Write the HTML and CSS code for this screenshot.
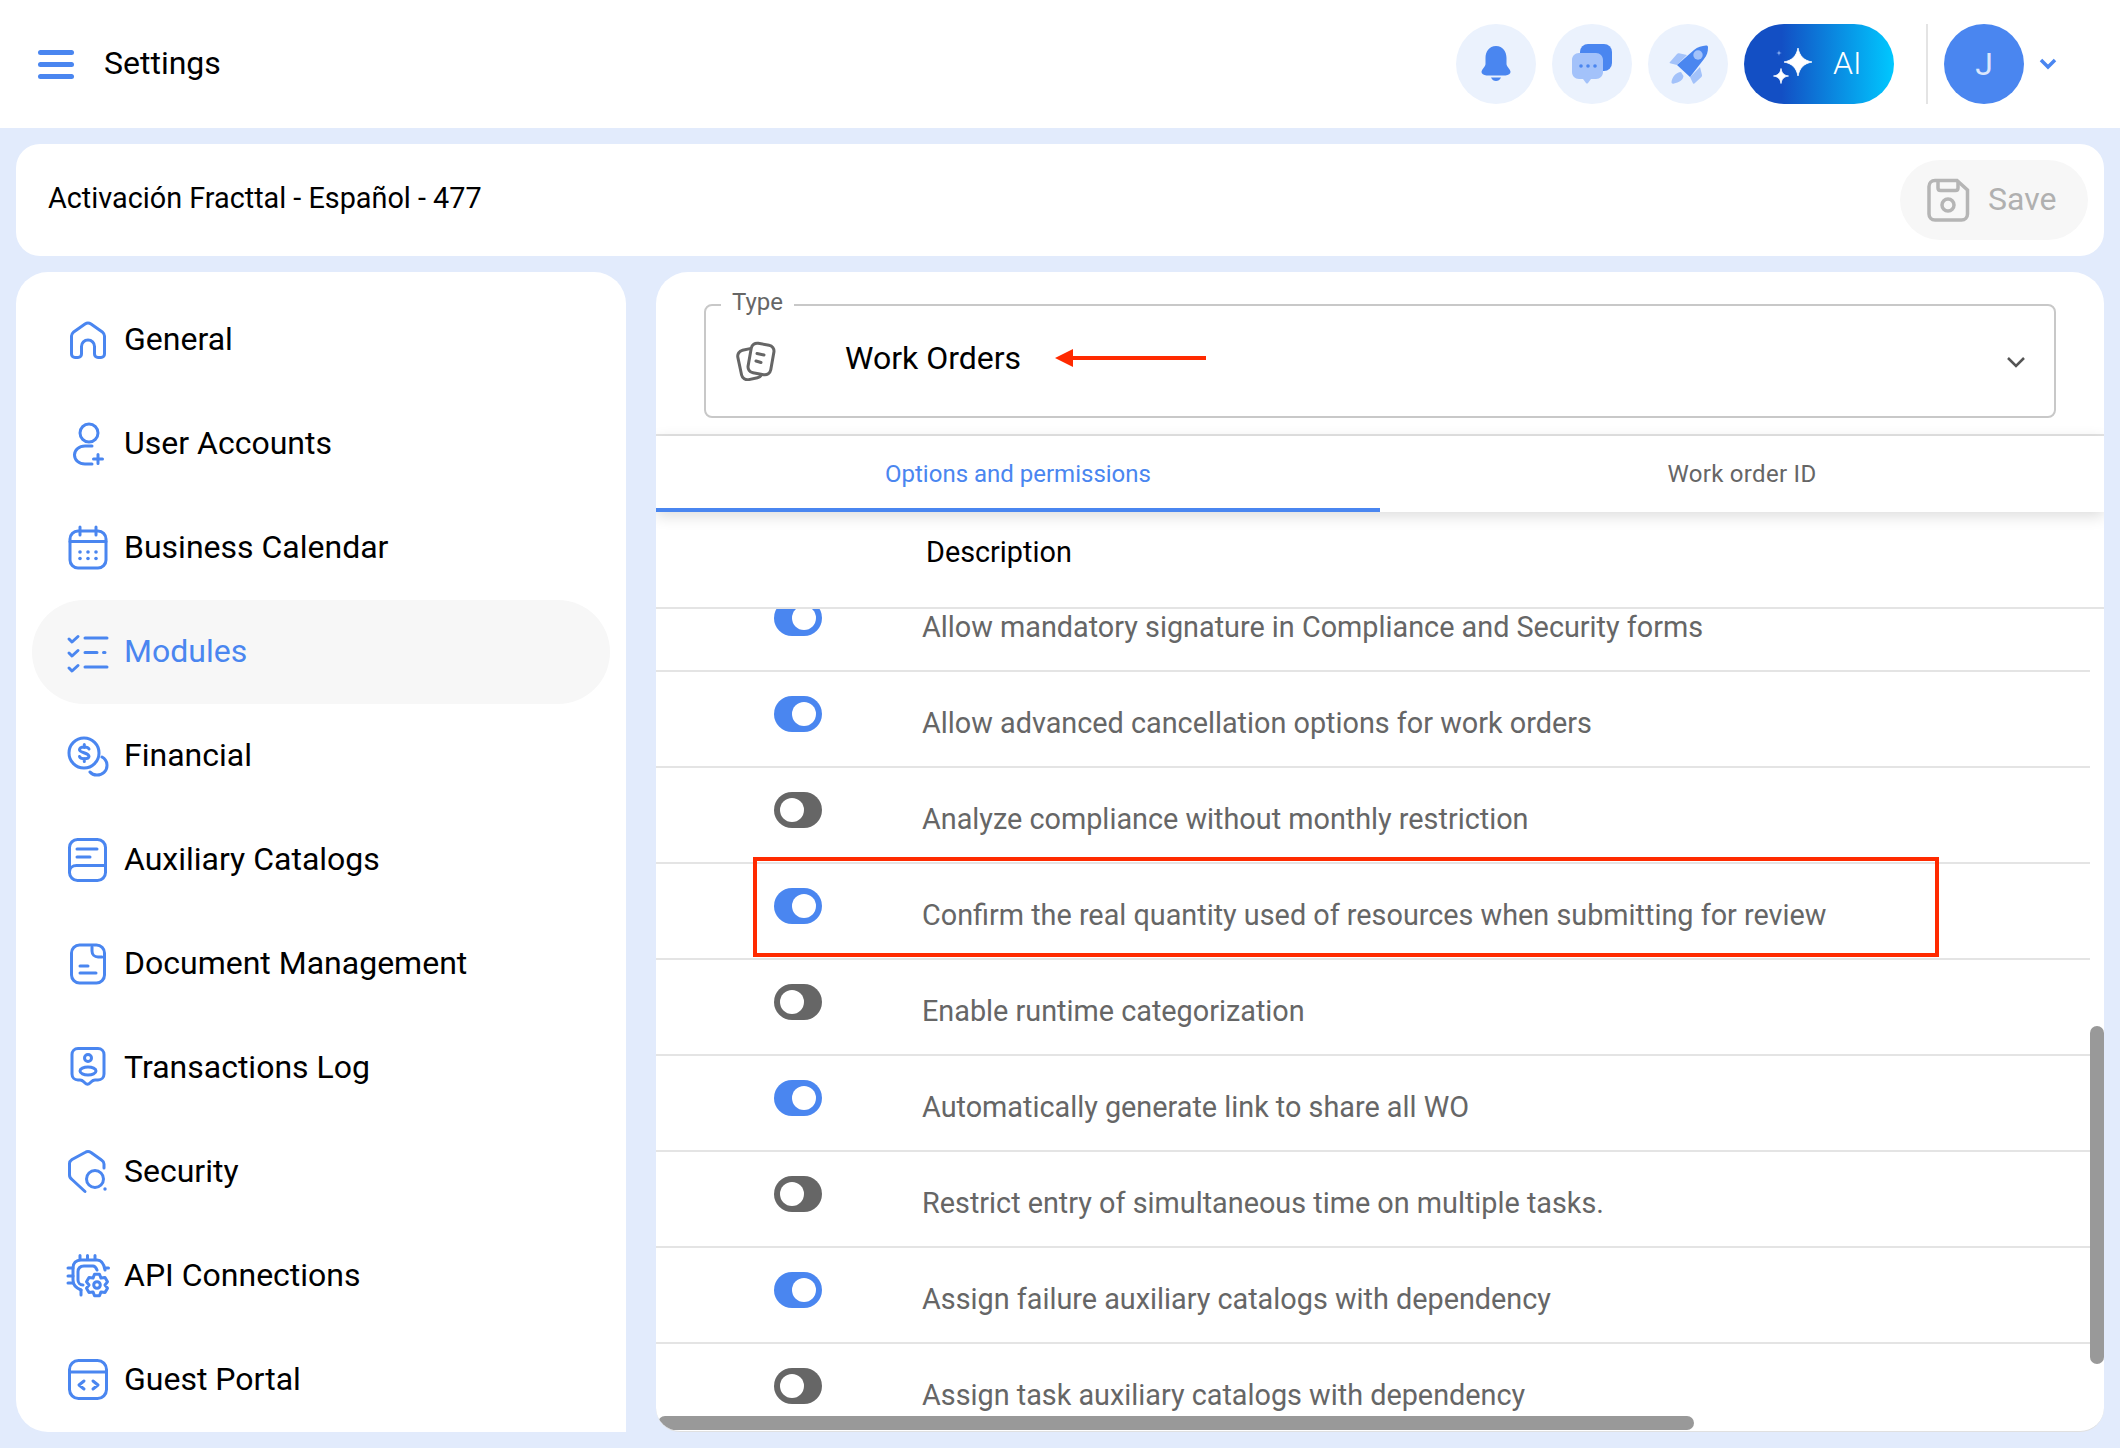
FILE: index.html
```html
<!DOCTYPE html>
<html lang="en">
<head>
    <meta charset="UTF-8">
    <meta name="viewport" content="width=device-width, initial-scale=1.0">
    <title>Settings</title>
    <link rel="stylesheet" href="styles.css">
</head>
<body>
    <header class="topbar">
        <div class="menu-icon"><span></span><span></span><span></span></div>
        <div class="topbar-title">Settings</div>
        <div class="topbar-actions">
            <div class="round-button">
                <svg width="80" height="80" viewBox="0 0 80 80">
                    <path class="fill-blue" d="M40 22c-7 0-10.500 6-10.500 12v6c0 3-4 5-4 8 0 2 2 3 5 3.500h19c3-.5 5-1.500 5-3.500 0-3-4-5-4-8v-6c0-6-3.500-12-10.500-12z"/>
                    <path class="fill-blue" d="M35 53.500h10c-1 2.500-3 3.500-5 3.500s-4-1-5-3.500z"/>
                </svg>
            </div>
            <div class="round-button">
                <svg width="80" height="80" viewBox="0 0 80 80">
                    <rect class="fill-blue" x="28" y="20" width="32" height="27" rx="8"/>
                    <path class="fill-light" d="M27 29h17c4 0 7 3 7 7v12c0 4-3 7-7 7h-5l-3 4c-.6.8-1.400.8-2 0l-3-4h-4c-4 0-7-3-7-7V36c0-4 3-7 7-7z"/>
                    <circle class="fill-blue" cx="29" cy="42" r="1.800"/>
                    <circle class="fill-blue" cx="36" cy="42" r="1.800"/>
                    <circle class="fill-blue" cx="43" cy="42" r="1.800"/>
                </svg>
            </div>
            <div class="round-button">
                <svg width="80" height="80" viewBox="0 0 80 80">
                    <path class="fill-light" d="M22 38l7-8c.6-.7 1.200-1 2-.8l8 1.800-10 10-6-1.500c-1.400-.4-1.800-.7-1-1.500z"/>
                    <path class="fill-light" d="M42 53l10-10 2 8c.2.800 0 1.400-.6 2l-7 6.500c-.8.700-1.400.3-1.800-1z"/>
                    <path class="fill-light" d="M33 48c-5 .5-9 5-9.500 10 0 1.500 1 2 2.500 1.500 5-1 9-3 9.500-7.500z"/>
                    <path class="fill-blue" d="M29 41l17-15c3.500-3 8-4 12-4.500 1.500 0 2 .5 2 2 0 4-1 8-4 11.500L42 53z"/>
                    <circle class="fill-light" cx="50" cy="31" r="4.700"/>
                </svg>
            </div>
            <div class="ai-button">
                <svg width="82" height="80" viewBox="0 0 82 80">
                    <path class="star" d="M54 24c1.500 8 6 12.500 14 14-8 1.500-12.500 6-14 14-1.500-8-6-12.500-14-14 8-1.500 12.500-6 14-14z"/>
                    <path class="star" d="M37 44.500c.7 4.500 3 6.800 7.500 7.500-4.500.7-6.800 3-7.500 7.500-.7-4.500-3-6.800-7.500-7.500 4.500-.7 6.800-3 7.500-7.500z"/>
                    <path class="fill-faint" d="M35 26c.2 2 1 2.800 3 3-2 .2-2.800 1-3 3-.2-2-1-2.800-3-3 2-.2 2.800-1 3-3z"/>
                </svg>
                <span>AI</span>
            </div>
            <div class="topbar-divider"></div>
            <div class="avatar">J</div>
            <svg class="avatar-chevron" width="18" height="12" viewBox="0 0 18 12">
                <path d="M2 2l7 7 7-7"/>
            </svg>
        </div>
    </header>

    <main class="page">
        <section class="title-card">
            <div class="title-text">Activación Fracttal - Español - 477</div>
            <div class="save-button">
                <svg width="44" height="44" viewBox="0 0 44 44">
                    <path d="M9 2.500h22l10.500 9.500v24c0 3.500-2.500 6-6 6H9c-3.500 0-6-2.500-6-6V8.500c0-3.500 2.500-6 6-6z"/>
                    <path d="M12 3v7c0 1.500 1 2.500 2.500 2.500h15c1.500 0 2.500-1 2.500-2.500V3"/>
                    <circle cx="22" cy="27" r="6"/>
                </svg>
                <span>Save</span>
            </div>
        </section>

        <div class="columns">
            <nav class="sidebar">
                <a class="side-item">
                    <svg class="side-icon" viewBox="0 0 48 48"><path d="M7.500 38V20c0-1.500.7-2.800 1.800-3.700L21 8c1.800-1.300 4.200-1.300 6 0l11.700 8.300c1.100.9 1.800 2.200 1.800 3.700v18c0 2-1.500 3.500-3.500 3.500h-3c-2 0-3.500-1.500-3.500-3.500v-7.500c0-3.600-2.900-6.500-6.500-6.500s-6.500 2.900-6.500 6.500V38c0 2-1.500 3.500-3.500 3.500h-3c-2 0-3.500-1.500-3.500-3.500z"/></svg>
                    <span>General</span>
                </a>
                <a class="side-item">
                    <svg class="side-icon" viewBox="0 0 48 48"><circle cx="25" cy="13" r="9"/><path d="M28 26h-7c-6 0-10.500 4-10.500 9s4.500 9 10.500 9h7"/><path d="M34 34.500v9M29.500 39h9"/></svg>
                    <span>User Accounts</span>
                </a>
                <a class="side-item">
                    <svg class="side-icon" viewBox="0 0 48 48"><rect x="6" y="7" width="36" height="37" rx="8"/><path d="M6 17.500h36M16 3v8M32 3v8"/><g class="icon-dots"><circle cx="16" cy="28" r="1.800"/><circle cx="24" cy="28" r="1.800"/><circle cx="32" cy="28" r="1.800"/><circle cx="16" cy="34.500" r="1.800"/><circle cx="24" cy="34.500" r="1.800"/><circle cx="32" cy="34.500" r="1.800"/></g></svg>
                    <span>Business Calendar</span>
                </a>
                <a class="side-item active">
                    <svg class="side-icon" viewBox="0 0 48 48"><path d="M5 11l3 3 6-5.500M5 25l3 3 6-5.500M5 40l3 3 6-5.500"/><path d="M21 10h22M21 24.500h12M39.500 24.500h1.500M21 39h22"/></svg>
                    <span>Modules</span>
                </a>
                <a class="side-item">
                    <svg class="side-icon" viewBox="0 0 48 48"><circle cx="20" cy="21" r="15"/><path d="M38 25c3.500 2 5 5 5 8.500 0 5.500-4.500 9.500-10 9.500-3 0-5.500-1-7-3"/><path d="M25 17c-1-2.500-9-3-9.500.5-.5 3.500 9.500 3 9.500 7-.5 3-8.500 3-9.500 0M20.300 12.500v3M20.300 26.500v3"/></svg>
                    <span>Financial</span>
                </a>
                <a class="side-item">
                    <svg class="side-icon" viewBox="0 0 48 48"><rect x="5.500" y="3.500" width="36" height="41" rx="8"/><path d="M5.500 36c0-4 3-6.500 7-6.500h29M13 13h20M13 21h13"/></svg>
                    <span>Auxiliary Catalogs</span>
                </a>
                <a class="side-item">
                    <svg class="side-icon" viewBox="0 0 48 48"><rect x="7.500" y="5" width="33" height="38" rx="8"/><path d="M28 7v4c0 3.500 2.500 6 6 6h4M16 26h8M16 33h16"/></svg>
                    <span>Document Management</span>
                </a>
                <a class="side-item">
                    <svg class="side-icon" viewBox="0 0 48 48"><path d="M14 4.500h20c3.500 0 6 2.500 6 6V30c0 3.500-2.500 6-6 6h-3c-2 0-3 1-4 2l-1 1c-1.500 1.500-3.500 1.500-5 0l-1-1c-1-1-2-2-4-2h-2c-3.500 0-6-2.500-6-6V10.500c0-3.500 2.500-6 6-6z"/><circle cx="24" cy="14" r="3.500"/><ellipse cx="24" cy="27" rx="8" ry="4"/></svg>
                    <span>Transactions Log</span>
                </a>
                <a class="side-item">
                    <svg class="side-icon" viewBox="0 0 48 48"><path d="M40 20v-4c0-2-1-3-2.500-4L27 4.500c-2-1.200-4-1.200-6 0L8 11.500c-1.500 1-2.500 2-2.500 4V27c0 2 1 3.500 2.500 4.500L21 43.500"/><circle cx="31" cy="31" r="8.500"/><circle class="icon-dot" cx="41" cy="41" r="1.700"/></svg>
                    <span>Security</span>
                </a>
                <a class="side-item">
                    <svg class="side-icon" viewBox="0 0 48 48"><path d="M41 18c-1-6-3-10-8-10H17c-5 0-8 3-8 8v12c0 4 3 8 8 10"/><path d="M33 18c-1-2.500-2-4-4-4H20c-3.500 0-6 2-6 6v8c0 2.500 2 5 5 5"/><path d="M16 3.500v4M23.500 3.500v4M31 3.500v4M4 16h5M4 24h5M4 31h5M41 16h3.500M17 38v5"/><path d="M30.500 22.300h5l1.500 3.800 4-.6 2.500 4.300-2.500 3.200 2.500 3.200-2.500 4.300-4-.6-1.500 3.800h-5l-1.500-3.800-4 .6-2.500-4.300 2.500-3.200-2.500-3.200 2.500-4.300 4 .6z"/><circle cx="33" cy="33" r="3.300"/></svg>
                    <span>API Connections</span>
                </a>
                <a class="side-item">
                    <svg class="side-icon" viewBox="0 0 48 48"><rect x="5.500" y="4.500" width="37" height="38" rx="9"/><path d="M5.500 16h37M20 25l-5 4 5 4M29 25l5 4-5 4"/></svg>
                    <span>Guest Portal</span>
                </a>
            </nav>

            <section class="panel">
                <div class="type-wrap">
                    <div class="type-select">
                        <span class="type-label">Type</span>
                        <svg class="type-icon" width="40" height="40" viewBox="0 0 40 40">
                            <rect x="3.500" y="8" width="21" height="30" rx="6" transform="rotate(-12 14 23)"/>
                            <rect class="type-card" x="13.500" y="3" width="23" height="30" rx="6" transform="rotate(10 25 18)"/>
                            <path d="M21 12.500l7 1.500M20 20l5 1.500"/>
                        </svg>
                        <span class="type-value">Work Orders</span>
                        <svg class="type-arrow" width="152" height="20" viewBox="0 0 152 20">
                            <path d="M0 10L18 1V8L151 8V12L18 12V19z"/>
                        </svg>
                        <svg class="type-chevron" width="20" height="12" viewBox="0 0 20 12">
                            <path d="M2 2l8 8 8-8"/>
                        </svg>
                    </div>
                </div>

                <div class="tabs">
                    <div class="tab active">Options and permissions</div>
                    <div class="tab">Work order ID</div>
                </div>

                <div class="list-head">Description</div>

                <div class="list">
                    <div class="row"><span class="toggle on"></span><span class="row-text">Allow mandatory signature in Compliance and Security forms</span></div>
                    <div class="row"><span class="toggle on"></span><span class="row-text">Allow advanced cancellation options for work orders</span></div>
                    <div class="row"><span class="toggle"></span><span class="row-text">Analyze compliance without monthly restriction</span></div>
                    <div class="row">
                        <span class="toggle on"></span><span class="row-text">Confirm the real quantity used of resources when submitting for review</span>
                        <div class="red-box"></div>
                    </div>
                    <div class="row"><span class="toggle"></span><span class="row-text">Enable runtime categorization</span></div>
                    <div class="row"><span class="toggle on"></span><span class="row-text">Automatically generate link to share all WO</span></div>
                    <div class="row"><span class="toggle"></span><span class="row-text">Restrict entry of simultaneous time on multiple tasks.</span></div>
                    <div class="row"><span class="toggle on"></span><span class="row-text">Assign failure auxiliary catalogs with dependency</span></div>
                    <div class="row"><span class="toggle"></span><span class="row-text">Assign task auxiliary catalogs with dependency</span></div>
                </div>

                <div class="scroll-y"></div>
                <div class="scroll-x"></div>
            </section>
        </div>
    </main>
</body>
</html>
```

FILE: styles.css
```css
html, body {
    margin: 0;
    padding: 0;
    height: 1448px;
    overflow: hidden;
}
body {
    font-family: Roboto, "Liberation Sans", sans-serif;
    background-color: #e2ebfc;
    color: #000;
}
svg {
    display: block;
    flex-shrink: 0;
}
.fill-blue {
    fill: #4a86f0;
}
.fill-light {
    fill: #a3c2fa;
}
.star {
    fill: #fff;
    stroke: #fff;
    stroke-width: 0.800;
}
.fill-faint {
    fill: #7fa8ee;
}

/* top bar */
.topbar {
    display: flex;
    align-items: center;
    height: 128px;
    padding: 0 63px 0 38px;
    background-color: #fff;
    box-sizing: border-box;
}
.menu-icon {
    display: flex;
    flex-direction: column;
    gap: 7px;
    width: 36px;
}
.menu-icon span {
    height: 5px;
    border-radius: 3px;
    background-color: #4a86f0;
}
.topbar-title {
    margin: -2px 0 0 30px;
    font-size: 32px;
}
.topbar-actions {
    display: flex;
    align-items: center;
    gap: 16px;
    margin-left: auto;
}
.round-button {
    width: 80px;
    height: 80px;
    border-radius: 50%;
    background-color: #ebf2fd;
}
.ai-button {
    display: flex;
    align-items: center;
    width: 150px;
    height: 80px;
    border-radius: 40px;
    background: linear-gradient(90deg, #134fc4 25%, #00c8ff 100%);
    color: #fff;
    font-size: 32px;
    font-weight: 300;
}
.ai-button span {
    margin: -2px 0 0 7px;
}
.topbar-divider {
    width: 2px;
    height: 80px;
    margin-left: 16px;
    background-color: #e4e4e4;
}
.avatar {
    display: flex;
    align-items: center;
    justify-content: center;
    width: 80px;
    height: 80px;
    border-radius: 50%;
    background-color: #4a86f0;
    color: #dbe7fc;
    font-size: 32px;
}
.avatar-chevron {
    margin-left: -1px;
    fill: none;
    stroke: #4a86f0;
    stroke-width: 3.500;
}

/* page */
.page {
    display: flex;
    flex-direction: column;
    gap: 16px;
    padding: 16px;
}
.title-card {
    display: flex;
    align-items: center;
    justify-content: space-between;
    height: 112px;
    padding: 0 16px 0 32px;
    border-radius: 24px;
    background-color: #fff;
    box-sizing: border-box;
}
.title-text {
    margin-top: -5px;
    font-size: 28.800px;
}
.save-button {
    display: flex;
    align-items: center;
    gap: 18px;
    width: 188px;
    height: 80px;
    padding-left: 26px;
    border-radius: 40px;
    background-color: #f7f7f7;
    color: #b0b0b0;
    font-size: 32px;
    box-sizing: border-box;
}
.save-button span {
    margin-top: -2px;
}
.save-button svg {
    fill: none;
    stroke: #b5b5b5;
    stroke-width: 3.500;
}
.columns {
    display: flex;
    gap: 30px;
    height: 1160px;
}

/* sidebar */
.sidebar {
    width: 610px;
    padding: 16px 16px 0;
    border-radius: 32px 32px 0 32px;
    background-color: #fff;
    box-sizing: border-box;
    overflow: hidden;
}
.side-item {
    display: flex;
    align-items: center;
    gap: 12px;
    height: 104px;
    padding-left: 32px;
    border-radius: 52px;
    font-size: 32px;
    box-sizing: border-box;
}
.side-item span {
    margin-top: -2px;
}
.side-item.active {
    background-color: #f7f7f7;
    color: #4a86f0;
}
.side-icon {
    width: 48px;
    height: 48px;
    fill: none;
    stroke: #4a86f0;
    stroke-width: 3;
    stroke-linecap: round;
    stroke-linejoin: round;
}
.icon-dots, .icon-dot {
    fill: #4a86f0;
    stroke: none;
}

/* right panel */
.panel {
    position: relative;
    flex: 1;
    height: 1159px;
    border-radius: 32px 32px 24px 24px;
    border-bottom: 1px solid #e0e0e0;
    background-color: #fff;
    overflow: hidden;
}
.type-wrap {
    padding: 32px 48px 16px;
    border-bottom: 2px solid #e4e4e4;
}
.type-select {
    position: relative;
    display: flex;
    align-items: center;
    height: 114px;
    padding: 0 28px 0 30px;
    border: 2px solid #c8c8c8;
    border-radius: 8px;
    box-sizing: border-box;
}
.type-label {
    position: absolute;
    top: -18px;
    left: 15px;
    padding: 0 11px;
    background-color: #fff;
    color: #666;
    font-size: 24px;
}
.type-icon {
    fill: none;
    stroke: #666;
    stroke-width: 3;
    stroke-linecap: round;
}
.type-card {
    fill: #fff;
}
.type-value {
    margin-left: 69px;
    margin-top: -6px;
    font-size: 32px;
}
.type-arrow {
    margin-left: 34px;
    margin-top: -6px;
    fill: #ff2a00;
}
.type-chevron {
    margin: 2px 0 0 auto;
    fill: none;
    stroke: #555;
    stroke-width: 2.500;
}
.tabs {
    position: relative;
    display: flex;
    height: 76px;
    box-shadow: 0 4px 14px rgba(0, 0, 0, 0.14);
}
.tab {
    flex: 1;
    padding-top: 24px;
    color: #666;
    font-size: 24px;
    letter-spacing: 0.300px;
    text-align: center;
    box-sizing: border-box;
}
.tab.active {
    border-bottom: 4px solid #4a86f0;
    color: #4a86f0;
    letter-spacing: 0;
}
.list-head {
    height: 97px;
    padding: 23px 0 0 270px;
    border-bottom: 2px solid #e4e4e4;
    font-size: 28.800px;
    box-sizing: border-box;
}
.list {
    width: 1434px;
    height: 822px;
    overflow: hidden;
}
.row {
    position: relative;
    display: flex;
    height: 96px;
    padding: 24px 0 0 118px;
    border-bottom: 2px solid #e4e4e4;
    box-sizing: border-box;
}
.row:first-child {
    margin-top: -33px;
}
.toggle {
    position: relative;
    width: 48px;
    height: 36px;
    border-radius: 18px;
    background-color: #666;
    flex-shrink: 0;
}
.toggle::after {
    content: "";
    position: absolute;
    top: 6px;
    left: 6px;
    width: 24px;
    height: 24px;
    border-radius: 50%;
    background-color: #fff;
}
.toggle.on {
    background-color: #4a86f0;
}
.toggle.on::after {
    left: 18px;
}
.row-text {
    margin: 9px 0 0 100px;
    color: #666;
    font-size: 28.800px;
    line-height: 36px;
}
.red-box {
    position: absolute;
    top: -7px;
    left: 97px;
    width: 1186px;
    height: 100px;
    border: 4px solid #ff2a00;
    box-sizing: border-box;
}
.scroll-y {
    position: absolute;
    top: 754px;
    right: 0;
    width: 14px;
    height: 338px;
    border-radius: 7px;
    background-color: #999;
}
.scroll-x {
    position: absolute;
    left: 2px;
    bottom: 1px;
    width: 1036px;
    height: 14px;
    border-radius: 7px;
    background-color: #999;
}
```
